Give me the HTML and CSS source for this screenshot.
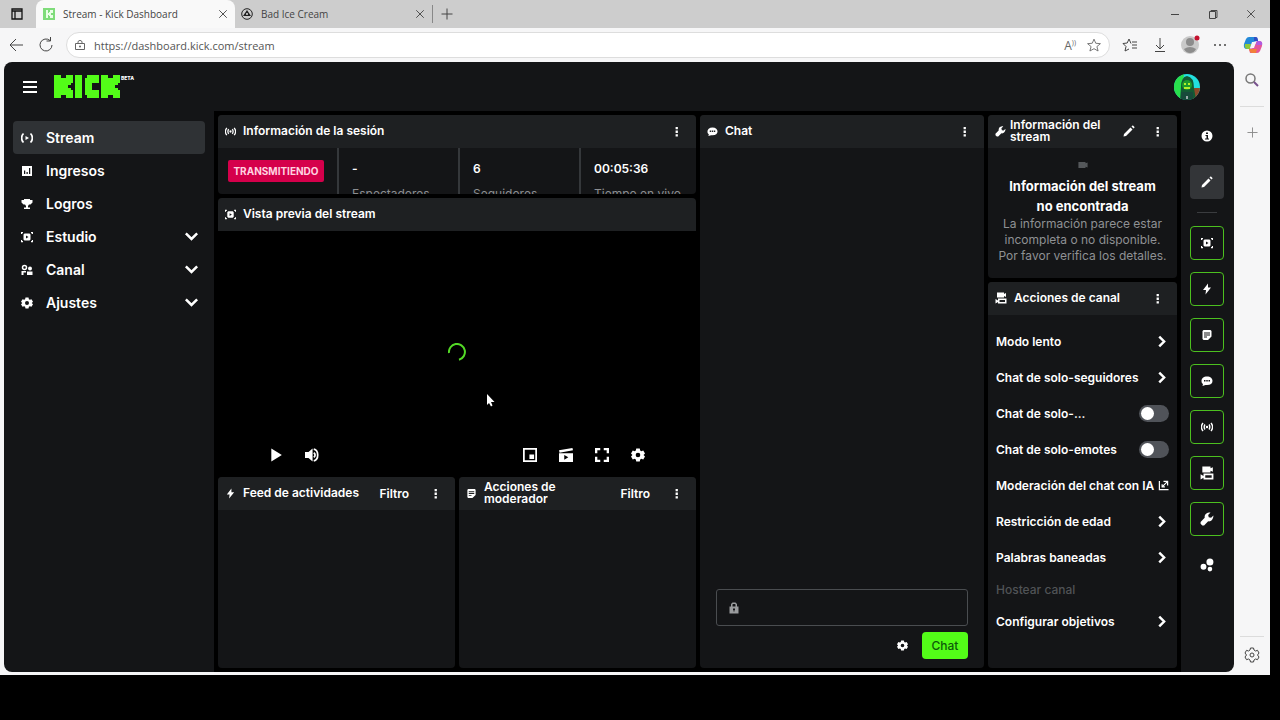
FILE: index.html
```html
<!DOCTYPE html>
<html lang="es">
  <head>
    <meta charset="utf-8" />
    <title>Stream - Kick Dashboard</title>
    <link rel="stylesheet" href="styles.css">
  </head>

  <body>
    <!-- icon sprite -->
    <svg class="sprite" aria-hidden="true">
      <symbol id="i-dots" viewBox="0 0 24 24"><path d="M10 2h5v5h-5zM10 10h5v5h-5zM10 18h5v5h-5z"/></symbol>
      <symbol id="i-gear" viewBox="0 0 24 24"><path fill-rule="evenodd" d="M9 1h6l.8 3.400 1.800 1L21 4.300l3 5.200-2.500 2.500 2.500 2.500-3 5.200-3.400-1.100-1.800 1L15 23H9l-.8-3.400-1.800-1L3 19.700l-3-5.200L2.500 12 0 9.500l3-5.200 3.400 1.100 1.800-1zM12 8a4 4 0 1 0 0 8 4 4 0 0 0 0-8z"/></symbol>
      <symbol id="i-chevron-down" viewBox="0 0 24 24"><path d="M3 7l9 9 9-9" fill="none" stroke="currentColor" stroke-width="4"/></symbol>
      <symbol id="i-chevron-right" viewBox="0 0 24 24"><path d="M6 3l9 9-9 9" fill="none" stroke="currentColor" stroke-width="4.500"/></symbol>
      <symbol id="i-stream" viewBox="0 0 24 24"><path d="M9 8l7 4-7 4z"/><path d="M5 3C0 8 0 16 5 21M19 3c5 5 5 13 0 18" fill="none" stroke="currentColor" stroke-width="3.500"/></symbol>
      <symbol id="i-signal" viewBox="0 0 24 24"><circle cx="12" cy="12" r="2.500"/><path d="M4 4C0 9 0 15 4 20M20 4c4 5 4 11 0 16M8 7c-2 3-2 7 0 10M16 7c2 3 2 7 0 10" fill="none" stroke="currentColor" stroke-width="2.800"/></symbol>
      <symbol id="i-chart" viewBox="0 0 24 24"><path fill-rule="evenodd" d="M2 2h20v20H2zM6 11v7h2.500v-7zM11 14v4h2.500v-4zM16 6v12h2.500V6z"/></symbol>
      <symbol id="i-trophy" viewBox="0 0 24 24"><path d="M6 2h12v2h5v5l-4 4h-3l-2 3v3h4v3H6v-3h4v-3l-2-3H5L1 9V4h5z"/></symbol>
      <symbol id="i-preview" viewBox="0 0 24 24"><path fill-rule="evenodd" d="M7 5h10l2 2v10l-2 2H7l-2-2V7zM10 9v6l5-3z"/><path d="M1 6V3h3M20 3h3v3M23 18v3h-3M4 21H1v-3" fill="none" stroke="currentColor" stroke-width="2.500"/></symbol>
      <symbol id="i-people" viewBox="0 0 24 24"><circle cx="7" cy="7" r="4" fill="none" stroke="currentColor" stroke-width="3"/><circle cx="18" cy="9" r="4"/><path d="M1 22v-8h9v3H5v5zM12 15h11v7H12z"/></symbol>
      <symbol id="i-bubble" viewBox="0 0 24 24"><path fill-rule="evenodd" d="M12 3C5 3 1 7 1 12c0 3 1 5 3 6l-1 4 6-2h3c7 0 11-3 11-8s-4-9-11-9zM6 10h3v3H6zM10.500 10h3v3h-3zM15 10h3v3h-3z"/></symbol>
      <symbol id="i-wrench" viewBox="0 0 24 24"><path d="M23 6l-4 4-4-1-1-4 4-4c-4-1-9 1-10 6v3l-7 7v3l3 3h3l7-7c5 1 9-4 9-10z"/></symbol>
      <symbol id="i-pencil" viewBox="0 0 24 24"><path d="M1 23l1-5L15 5l4 4L6 22zM17 3l2-2h1l3 3v1l-2 2z"/></symbol>
      <symbol id="i-bolt" viewBox="0 0 24 24"><path d="M14 1L4 14h6l-1 9 11-14h-6z"/></symbol>
      <symbol id="i-note" viewBox="0 0 24 24"><path fill-rule="evenodd" d="M5 2h14l2 2v11l-7 7H5l-2-2V4zM6 7v2h12V7zM6 11v2h12v-2zM6 15v2h6v-2z"/></symbol>
      <symbol id="i-cams" viewBox="0 0 24 24"><path fill-rule="evenodd" d="M4 1h14v3l4-2v8l-4-2v3H4zM6 13h17v10H6v-3l-5 3v-9l5 3zM9 16v4h11v-4z"/></symbol>
      <symbol id="i-cam" viewBox="0 0 24 24"><path d="M1 5h17v3l5-2v12l-5-2v3H1z"/></symbol>
      <symbol id="i-external" viewBox="0 0 24 24"><path d="M3 2v19h20M12 3h9v9M21 3L9 15M9 9v6h6" fill="none" stroke="currentColor" stroke-width="2.600"/></symbol>
      <symbol id="i-info" viewBox="0 0 24 24"><path fill-rule="evenodd" d="M12 1a11 11 0 1 0 0 22 11 11 0 0 0 0-22zM10 5h4v3h-4zM9 10h5v7h2v2H8v-2h3v-5H9z"/></symbol>
      <symbol id="i-bubbles" viewBox="0 0 24 24"><circle cx="17" cy="7" r="6"/><circle cx="6" cy="15" r="5"/><circle cx="17" cy="19" r="4"/></symbol>
      <symbol id="i-lock" viewBox="0 0 24 24"><path fill-rule="evenodd" d="M6 9V4l3-3h6l3 3v5h3v14H3V9zM9 9h6V5l-1-1h-4L9 5zM10 13v3h1v3h2v-3h1v-3z"/></symbol>
      <symbol id="i-play" viewBox="0 0 24 24"><path d="M4 1l18 11L4 23z"/></symbol>
      <symbol id="i-volume" viewBox="0 0 24 24"><path d="M0 7h6l7-6v22l-7-6H0z"/><path d="M15 8c3 2 3 6 0 8M15 2c9 2 9 18 0 20" fill="none" stroke="currentColor" stroke-width="3"/></symbol>
      <symbol id="i-pip" viewBox="0 0 24 24"><path fill-rule="evenodd" d="M0 0h24v24H0zM3 3v18h18V3z"/><path d="M11 11h8v8h-8z"/></symbol>
      <symbol id="i-clip" viewBox="0 0 24 24"><path fill-rule="evenodd" d="M0 9h24v15H0zM9 12v8l7-4z"/><path d="M0 4l23-4 1 4L1 8z"/></symbol>
      <symbol id="i-full" viewBox="0 0 24 24"><path d="M2 9V2h7M15 2h7v7M22 15v7h-7M9 22H2v-7" fill="none" stroke="currentColor" stroke-width="4"/></symbol>
      <symbol id="i-close" viewBox="0 0 24 24"><path d="M3 3l18 18M21 3L3 21" fill="none" stroke="currentColor" stroke-width="2.200"/></symbol>
      <symbol id="i-plus" viewBox="0 0 24 24"><path d="M12 1v22M1 12h22" fill="none" stroke="currentColor" stroke-width="2"/></symbol>
      <symbol id="i-star" viewBox="0 0 24 24"><path d="M12 2l3 7 8 .7-6 5 2 7.600-7-4-7 4 2-7.600-6-5L9 9z" fill="none" stroke="currentColor" stroke-width="1.500" stroke-linejoin="round"/></symbol>
    </svg>

    <div class="window">
      <!-- tabs -->
      <div class="tabstrip">
        <button class="tab-menu" aria-label="Pestañas"><svg class="ic12" viewBox="0 0 12 12"><path d="M1 1h10v10H1zM1 3h10M4 3v8" fill="none" stroke="currentColor" stroke-width="1.300"/></svg></button>
        <div class="tab active">
          <svg class="favicon" viewBox="0 0 12 12"><path d="M0 0h12v12H0z" fill="#7fdc7a"/><path d="M3 2h2v3h1V4h1V2h3v3H8v2h2v3H7V8H6V7H5v3H3z" fill="#e9ffe6"/></svg>
          <span>Stream - Kick Dashboard</span>
          <button aria-label="Cerrar"><svg><use href="#i-close"/></svg></button>
        </div>
        <div class="tab">
          <svg class="favicon" viewBox="0 0 12 12"><circle cx="6" cy="6" r="5.300" fill="none" stroke="#222"/><path d="M6 2l2 3 2 3H2l2-3z" fill="#222"/><circle cx="6" cy="6" r="1" fill="#ddd"/></svg>
          <span>Bad Ice Cream</span>
          <button aria-label="Cerrar"><svg><use href="#i-close"/></svg></button>
        </div>
        <button class="new-tab" aria-label="Nueva pestaña"><svg class="ic12"><use href="#i-plus"/></svg></button>
        <div class="win-buttons">
          <button aria-label="Minimizar"><svg viewBox="0 0 10 10"><path d="M1 5.500h8" stroke="currentColor"/></svg></button>
          <button aria-label="Restaurar"><svg viewBox="0 0 10 10"><path d="M1.500 2.500h6v7h-6zM3 2.500v-1h6v7H7.500" fill="none" stroke="currentColor"/></svg></button>
          <button aria-label="Cerrar ventana"><svg><use href="#i-close"/></svg></button>
        </div>
      </div>

      <!-- toolbar -->
      <div class="toolbar">
        <button aria-label="Atrás"><svg viewBox="0 0 16 16"><path d="M8 2L2 8l6 6M2 8h13" fill="none" stroke="currentColor"/></svg></button>
        <button aria-label="Recargar"><svg viewBox="0 0 16 16"><path d="M14 8a6 6 0 1 1-2-4.500M12.500 0v4h-4" fill="none" stroke="currentColor"/></svg></button>
        <div class="address">
          <svg class="ic12" viewBox="0 0 12 12"><path d="M1.500 4.500h9v6h-9zM4 4V2.500Q6 0 8 2.500V4" fill="none" stroke="currentColor"/><circle cx="6" cy="7.500" r="1"/></svg>
          <input type="text" value="https://dashboard.kick.com/stream" aria-label="Dirección">
          <span class="read">A<sup>))</sup></span>
          <button aria-label="Favorito"><svg><use href="#i-star"/></svg></button>
        </div>
        <button aria-label="Favoritos"><svg viewBox="0 0 16 16"><path d="M9 6.500L7 2 5.200 6 1 6.500l3 3L3 14l4-2M10 5h5M10 8h5M10 11h5" fill="none" stroke="currentColor"/></svg></button>
        <button aria-label="Descargas"><svg viewBox="0 0 16 16"><path d="M8 1v10M4 8l4 4 4-4M3 14.500h10" fill="none" stroke="currentColor"/></svg></button>
        <button aria-label="Perfil"><svg class="ic20" viewBox="0 0 20 20"><circle cx="10" cy="10" r="9" fill="#c9c9c9"/><circle cx="10" cy="7" r="4" fill="#8c8c8c"/><path d="M4 14q6-4 12 0-2 4-6 4t-6-4z" fill="#8c8c8c"/><circle cx="17" cy="3" r="2.500" fill="#c4122f"/></svg></button>
        <button aria-label="Más"><svg viewBox="0 0 16 16"><circle cx="3" cy="8" r="1"/><circle cx="8" cy="8" r="1"/><circle cx="13" cy="8" r="1"/></svg></button>
        <button class="copilot" aria-label="Copilot"><svg class="ic20" viewBox="0 0 20 20"><path d="M6 2h7l1 4-4 1-3 7H4Q0 14 1 9l2-5q1-2 3-2z" fill="#2389d8"/><path d="M2 9h6l-1 5H4q-3-1-2-5z" fill="#8fc93a"/><path d="M11 2h2q2 0 2 4h-4z" fill="#2f4fc4"/><path d="M14 6h2q4 0 3 5l-2 5q-1 2-3 2H7l-1-4 4-1z" fill="#e4569a"/><path d="M14 6h2q4 0 3 4h-6z" fill="#b05be0"/><path d="M6 14h8l-1 4H9q-2 0-3-4z" fill="#f2803a"/><path d="M9 7h4l-2 6H7z" fill="#f6f6f7"/></svg></button>
      </div>

      <div class="viewport">
        <div class="app">
          <header class="topbar">
            <button class="burger" aria-label="Menú"><svg viewBox="0 0 14 12"><path d="M0 1h14M0 6h14M0 11h14" stroke="currentColor" stroke-width="2"/></svg></button>
            <a href="#" class="logo" aria-label="Kick">
              <svg viewBox="0 0 28 9" preserveAspectRatio="none" shape-rendering="crispEdges">
                <g id="k"><rect width="3" height="9"/><rect x="2" y="2" width="2" height="5"/><rect x="3" y="1" width="2" height="7"/><rect x="5" width="3" height="3"/><rect x="4" y="2" width="3" height="2"/><rect x="4" y="3" width="2" height="3"/><rect x="4" y="5" width="3" height="2"/><rect x="5" y="6" width="3" height="3"/></g>
                <rect x="9" width="3" height="9"/>
                <rect x="13" y="1" width="3" height="7"/><rect x="14" width="5" height="3"/><rect x="14" y="6" width="5" height="3"/>
                <use href="#k" x="20"/>
              </svg>
              <sup>BETA</sup>
            </a>
            <button class="avatar" aria-label="Cuenta"><svg viewBox="0 0 26 26"><clipPath id="round"><circle cx="13" cy="13" r="13"/></clipPath><g clip-path="url(#round)"><path d="M0 0h26v26H0z" fill="#22dfe0"/><path d="M0 0h10L7 26H0z" fill="#28e04c"/><path d="M19 14h7v12h-7z" fill="#8a4a2a"/><path d="M13 2q7 1 7 12l2 12H6l1-13Q7 3 13 2z" fill="#125a33"/><circle cx="13" cy="11" r="5" fill="#1c9a2c"/><path d="M10 9h2v2h-2zM14 9h2v2h-2zM10 13h6v2h-6z" fill="#b2f02a"/><path d="M7 18h12v8H7z" fill="#174a3a"/><path d="M12 22h2v3h-2z" fill="#9aa"/></g></svg></button>
          </header>

          <nav class="sidebar">
            <a href="#" class="current"><svg><use href="#i-stream"/></svg>Stream</a>
            <a href="#"><svg><use href="#i-chart"/></svg>Ingresos</a>
            <a href="#"><svg><use href="#i-trophy"/></svg>Logros</a>
            <a href="#"><svg><use href="#i-preview"/></svg>Estudio<svg class="chev"><use href="#i-chevron-down"/></svg></a>
            <a href="#"><svg><use href="#i-people"/></svg>Canal<svg class="chev"><use href="#i-chevron-down"/></svg></a>
            <a href="#"><svg><use href="#i-gear"/></svg>Ajustes<svg class="chev"><use href="#i-chevron-down"/></svg></a>
          </nav>

          <main class="board">
            <div class="main-col">
              <section class="panel session">
                <div class="head"><svg><use href="#i-signal"/></svg><h2>Información de la sesión</h2><button aria-label="Opciones"><svg><use href="#i-dots"/></svg></button></div>
                <div class="stats">
                  <div class="state"><span class="live">TRANSMITIENDO</span></div>
                  <div><b>-</b><span>Espectadores</span></div>
                  <div><b>6</b><span>Seguidores</span></div>
                  <div><b>00:05:36</b><span>Tiempo en vivo</span></div>
                </div>
              </section>

              <section class="panel preview">
                <div class="head"><svg><use href="#i-preview"/></svg><h2>Vista previa del stream</h2></div>
                <div class="video">
                  <svg class="spinner" viewBox="0 0 18 18"><path d="M1 10A8 8 0 1 1 11 16.700" fill="none" stroke="currentColor" stroke-width="2"/></svg>
                  <svg class="cursor" viewBox="0 0 9 14"><path d="M1 1v11l2-2 2 3.500 1.500-1L5 9h3.500z" fill="#fff"/></svg>
                  <div class="controls">
                    <button aria-label="Reproducir"><svg><use href="#i-play"/></svg></button>
                    <button aria-label="Volumen"><svg><use href="#i-volume"/></svg></button>
                    <span class="spacer"></span>
                    <button aria-label="Imagen en imagen"><svg><use href="#i-pip"/></svg></button>
                    <button aria-label="Clip"><svg><use href="#i-clip"/></svg></button>
                    <button aria-label="Pantalla completa"><svg><use href="#i-full"/></svg></button>
                    <button aria-label="Configuración"><svg><use href="#i-gear"/></svg></button>
                  </div>
                </div>
              </section>

              <div class="feeds">
                <section class="panel">
                  <div class="head"><svg><use href="#i-bolt"/></svg><h2>Feed de actividades</h2><button class="filter">Filtro</button><button aria-label="Opciones"><svg><use href="#i-dots"/></svg></button></div>
                </section>
                <section class="panel">
                  <div class="head"><svg><use href="#i-note"/></svg><h2>Acciones de moderador</h2><button class="filter">Filtro</button><button aria-label="Opciones"><svg><use href="#i-dots"/></svg></button></div>
                </section>
              </div>
            </div>

            <section class="panel chat">
              <div class="head"><svg><use href="#i-bubble"/></svg><h2>Chat</h2><button aria-label="Opciones"><svg><use href="#i-dots"/></svg></button></div>
              <form class="chat-form">
                <div class="chat-box"><svg><use href="#i-lock"/></svg><input type="text" aria-label="Mensaje"></div>
                <div class="chat-send">
                  <button type="button" class="chat-gear" aria-label="Ajustes del chat"><svg><use href="#i-gear"/></svg></button>
                  <button type="button" class="send">Chat</button>
                </div>
              </form>
            </section>

            <div class="side-col">
              <section class="panel info">
                <div class="head"><svg><use href="#i-wrench"/></svg><h2>Información del stream</h2><button aria-label="Editar"><svg class="ic12"><use href="#i-pencil"/></svg></button><button aria-label="Opciones"><svg><use href="#i-dots"/></svg></button></div>
                <div class="empty">
                  <svg><use href="#i-cam"/></svg>
                  <h3>Información del stream no encontrada</h3>
                  <p>La información parece estar incompleta o no disponible. Por favor verifica los detalles.</p>
                </div>
              </section>

              <section class="panel">
                <div class="head"><svg class="ic12"><use href="#i-cams"/></svg><h2>Acciones de canal</h2><button aria-label="Opciones"><svg><use href="#i-dots"/></svg></button></div>
                <div class="actions">
                  <button>Modo lento<svg><use href="#i-chevron-right"/></svg></button>
                  <button>Chat de solo-seguidores<svg><use href="#i-chevron-right"/></svg></button>
                  <label>Chat de solo-...<input type="checkbox"></label>
                  <label>Chat de solo-emotes<input type="checkbox"></label>
                  <a href="#">Moderación del chat con IA<svg class="ext"><use href="#i-external"/></svg></a>
                  <button>Restricción de edad<svg><use href="#i-chevron-right"/></svg></button>
                  <button>Palabras baneadas<svg><use href="#i-chevron-right"/></svg></button>
                  <button class="off" disabled>Hostear canal</button>
                  <button>Configurar objetivos<svg><use href="#i-chevron-right"/></svg></button>
                </div>
              </section>
            </div>
          </main>

          <aside class="rail">
            <button aria-label="Ayuda"><svg><use href="#i-info"/></svg></button>
            <button class="edit" aria-label="Editar panel"><svg><use href="#i-pencil"/></svg></button>
            <hr>
            <button class="on" aria-label="Vista previa"><svg><use href="#i-preview"/></svg></button>
            <button class="on" aria-label="Actividades"><svg><use href="#i-bolt"/></svg></button>
            <button class="on" aria-label="Moderador"><svg><use href="#i-note"/></svg></button>
            <button class="on" aria-label="Chat"><svg><use href="#i-bubble"/></svg></button>
            <button class="on" aria-label="Sesión"><svg><use href="#i-signal"/></svg></button>
            <button class="on" aria-label="Canal"><svg class="ic14"><use href="#i-cams"/></svg></button>
            <button class="on" aria-label="Stream"><svg class="ic14"><use href="#i-wrench"/></svg></button>
            <button aria-label="Más"><svg class="ic14"><use href="#i-bubbles"/></svg></button>
          </aside>
        </div>

        <!-- browser side bar -->
        <div class="edge-bar">
          <button aria-label="Buscar"><svg viewBox="0 0 16 16"><circle cx="6.500" cy="6.500" r="4.500" fill="none" stroke="#777" stroke-width="1.500"/><path d="M10 10l4 4" stroke="#76508c" stroke-width="2"/></svg></button>
          <hr>
          <button aria-label="Agregar"><svg class="ic12"><use href="#i-plus"/></svg></button>
          <span class="spacer"></span>
          <hr>
          <button aria-label="Configuración"><svg viewBox="0 0 16 16"><path d="M6.500 1h3l.5 2 1.500 1 2-.7L15 6l-1.500 2L15 10l-1.500 2.700-2-.7-1.500 1-.5 2h-3L6 13l-1.500-1-2 .7L1 10l1.500-2L1 6l1.500-2.700 2 .7L6 3z" fill="none" stroke="currentColor"/><circle cx="8" cy="8" r="2" fill="none" stroke="currentColor"/></svg></button>
        </div>
      </div>
    </div>
  </body>
</html>
```
FILE: styles.css
```css
* {
  box-sizing: border-box;
}
body {
  margin: 0;
  height: 100vh;
  padding: 0 10px 45px 0;
  background: #000;
  font-family: Inter, sans-serif;
}
button {
  display: flex;
  align-items: center;
  justify-content: center;
  padding: 0;
  border: none;
  background: none;
  color: inherit;
  font: inherit;
}
a {
  color: inherit;
  text-decoration: none;
}
h2, h3, p {
  margin: 0;
}
hr {
  margin: 0;
  border: none;
  height: 1px;
}
svg {
  display: block;
  flex: none;
  fill: currentColor;
}
.sprite {
  position: absolute;
  width: 0;
  height: 0;
}
.spacer {
  flex: 1;
}

.window {
  height: 100%;
  display: flex;
  flex-direction: column;
  background: #f6f6f7;
  color: #444;
}

/* tabs */
.tabstrip {
  display: flex;
  height: 28px;
  background: #cdcdcd;
  font: 10px "Open Sans", sans-serif;
}
.tabstrip svg {
  width: 10px;
  height: 10px;
}
.tabstrip svg.ic12, .tabstrip .favicon {
  width: 12px;
  height: 12px;
}
.tab-menu {
  width: 36px;
  padding-right: 3px;
  color: #111;
}
.tab {
  display: flex;
  align-items: center;
  gap: 8px;
  width: 197px;
  padding: 0 7px 0 6px;
}
.tab.active {
  width: 199px;
  padding-left: 7px;
  background: #f9f9f9;
  border-radius: 8px 8px 0 0;
}
.tab span {
  flex: 1;
}
.new-tab {
  width: 28px;
  margin: 5px 0;
  border-left: 1px solid #888;
}
.win-buttons {
  display: flex;
  margin-left: auto;
}
.win-buttons button {
  width: 38px;
}

/* toolbar */
.toolbar {
  display: flex;
  align-items: center;
  height: 34px;
  padding-left: 1px;
}
.toolbar button {
  width: 30px;
}
.toolbar svg {
  width: 16px;
  height: 16px;
}
.toolbar svg.ic12 {
  width: 12px;
  height: 12px;
}
.toolbar svg.ic20 {
  width: 20px;
  height: 20px;
}
.address {
  flex: 1;
  display: flex;
  align-items: center;
  height: 26px;
  margin: 0 5px;
  padding-left: 7px;
  border: 1px solid #ddd;
  border-radius: 13px;
  background: #fff;
  color: #666;
}
.address input {
  flex: 1;
  margin-left: 8px;
  padding: 0;
  border: none;
  background: none;
  color: #555;
  font: 11px "Open Sans", sans-serif;
}
.address svg {
  width: 14px;
  height: 14px;
}
.read {
  font: 12px "Open Sans", sans-serif;
  margin-right: 3px;
}
.read sup {
  font-size: 7px;
}
.toolbar .copilot {
  width: 35px;
}

.viewport {
  flex: 1;
  display: flex;
  min-height: 0;
  padding: 0 0 3px 4px;
}
.edge-bar {
  display: flex;
  flex-direction: column;
  width: 36px;
}
.edge-bar button {
  height: 35px;
}
.edge-bar svg {
  width: 16px;
  height: 16px;
}
.edge-bar .ic12 {
  width: 11px;
  height: 11px;
  color: #888;
}
.edge-bar hr {
  margin: 9px 6px 8px;
  background: #dcdcdc;
}
.edge-bar .spacer + hr {
  margin-bottom: 0;
}

/* kick dashboard */
.app {
  flex: 1;
  display: grid;
  grid-template: 49px 1fr / 210px 1fr 53px;
  border-radius: 8px;
  overflow: hidden;
  background: #141517;
  color: #fff;
}
.topbar {
  grid-column: 1 / -1;
  display: flex;
  align-items: center;
  padding: 0 34px 0 19px;
}
.burger svg {
  width: 14px;
  height: 12px;
}
.logo {
  display: flex;
  margin-left: 17px;
}
.logo svg {
  width: 66px;
  height: 23px;
  fill: #53fc18;
}
.logo sup {
  margin-left: 1px;
  font-size: 5px;
  font-weight: 800;
  line-height: 6px;
}
.avatar {
  margin-left: auto;
}
.avatar svg {
  width: 26px;
  height: 26px;
}

.sidebar {
  padding: 10px 9px;
}
.sidebar a {
  display: flex;
  align-items: center;
  gap: 13px;
  height: 33px;
  padding: 0 6px 0 8px;
  border-radius: 4px;
  font-size: 14px;
  font-weight: 600;
}
.sidebar a.current {
  background: #2f3235;
}
.sidebar svg {
  width: 12px;
  height: 12px;
}
.sidebar svg.chev {
  width: 15px;
  height: 15px;
  margin-left: auto;
}

.board {
  display: grid;
  grid-template-columns: 478fr 284fr 189fr;
  gap: 4px;
  padding: 4px;
  background: #000;
}
.main-col {
  display: grid;
  grid-template-rows: 79px 1fr 191px;
  gap: 4px;
}
.side-col {
  display: grid;
  grid-template-rows: 163px 1fr;
  gap: 4px;
}
.feeds {
  display: grid;
  grid-template-columns: 1fr 1fr;
  gap: 4px;
}
.panel {
  display: flex;
  flex-direction: column;
  min-width: 0;
  border-radius: 4px;
  overflow: hidden;
  background: #141517;
}
.head {
  display: flex;
  align-items: center;
  flex: none;
  height: 33px;
  padding: 0 6px 1px 7px;
  background: #1e2022;
}
.head svg {
  width: 11px;
  height: 11px;
}
.head h2 {
  flex: 1;
  margin-left: 7px;
  font-size: 12px;
  font-weight: 600;
  line-height: 12px;
}
.info .head h2 {
  margin-left: 4px;
}
.head button {
  width: 28px;
  height: 28px;
}
.head .filter {
  width: auto;
  margin-right: 12px;
  font-size: 12px;
  font-weight: 600;
}
.head svg.ic12 {
  width: 12px;
  height: 12px;
}

.stats {
  display: grid;
  grid-template-columns: 119fr 121fr 121fr 117fr;
  flex: 1;
  min-height: 0;
  font-size: 12px;
}
.stats div {
  padding: 13px 0 0 13px;
  border-left: 2px solid #35383b;
  white-space: nowrap;
}
.stats .state {
  padding: 12px 0 0 10px;
  border: none;
}
.stats b {
  display: block;
  margin-bottom: 9px;
  font-weight: 600;
  line-height: 16px;
}
.stats div > span {
  color: #8b8d90;
}
.stats .live {
  display: block;
  width: 96px;
  border-radius: 2px;
  background: #d5004b;
  color: #ffd3e0;
  font-size: 10px;
  font-weight: 700;
  line-height: 22px;
  text-align: center;
}

.preview {
  background: #000;
}
.video {
  position: relative;
  flex: 1;
  display: flex;
  align-items: center;
  justify-content: center;
}
.spinner {
  width: 18px;
  height: 18px;
  color: #53d926;
}
.cursor {
  position: absolute;
  left: 56%;
  top: 67%;
  width: 9px;
  height: 14px;
}
.controls {
  position: absolute;
  left: 0;
  right: 0;
  bottom: 0;
  display: flex;
  padding: 0 40px;
}
.controls button {
  width: 36px;
  height: 36px;
}
.controls svg {
  width: 14px;
  height: 14px;
}

.chat-form {
  margin-top: auto;
  padding: 0 16px 9px;
}
.chat-box {
  display: flex;
  align-items: center;
  height: 37px;
  padding: 0 11px;
  border: 1px solid #4a4d50;
  border-radius: 3px;
  color: #9a9c9e;
}
.chat-box svg {
  width: 12px;
  height: 12px;
}
.chat-gear svg {
  width: 11px;
  height: 11px;
}
.chat-box input {
  flex: 1;
  min-width: 0;
  margin-left: 8px;
  border: none;
  background: none;
  color: #fff;
}
.chat-send {
  display: flex;
  justify-content: flex-end;
  gap: 6px;
  margin-top: 6px;
}
.chat-gear {
  width: 28px;
}
.send {
  width: 46px;
  height: 27px;
  border-radius: 4px;
  background: #53fc18;
  color: #0d5a0a;
  font-size: 12px;
  font-weight: 500;
}

.empty {
  padding: 12px 8px 0;
  text-align: center;
}
.empty svg {
  width: 10px;
  height: 10px;
  margin: 0 auto 6px;
  color: #55585b;
}
.empty h3 {
  padding: 0 8px;
  font-size: 13px;
  font-weight: 700;
  line-height: 20px;
}
.empty p {
  color: #8f9194;
  font-size: 12px;
  line-height: 16px;
}

.actions {
  padding: 8px 8px 0;
  font-size: 12px;
  font-weight: 600;
}
.actions > * {
  display: flex;
  align-items: center;
  justify-content: space-between;
  width: 100%;
  height: 36px;
  white-space: nowrap;
}
.actions svg {
  width: 13px;
  height: 13px;
}
.actions svg.ext {
  width: 11px;
  height: 11px;
}
.actions .off {
  height: 28px;
  color: #505356;
  font-weight: 500;
}
.actions input {
  appearance: none;
  width: 30px;
  height: 17px;
  margin: 0;
  padding: 2px;
  border-radius: 9px;
  background: #505359;
}
.actions input::before {
  content: "";
  display: block;
  width: 13px;
  height: 13px;
  border-radius: 50%;
  background: #fff;
}

.rail {
  display: flex;
  flex-direction: column;
  align-items: center;
  gap: 12px;
  padding: 8px 1px 0 0;
}
.rail button {
  width: 34px;
  height: 34px;
  border-radius: 4px;
}
.rail svg {
  width: 12px;
  height: 12px;
}
.rail svg.ic14 {
  width: 14px;
  height: 14px;
}
.rail .edit {
  background: #333538;
}
.rail .on {
  border: 1px solid #4cc01f;
}
.rail hr {
  width: 20px;
  height: 3px;
  border-top: 1px solid #141517;
  border-bottom: 1px solid #141517;
  background: #3a3c3f;
}
```
